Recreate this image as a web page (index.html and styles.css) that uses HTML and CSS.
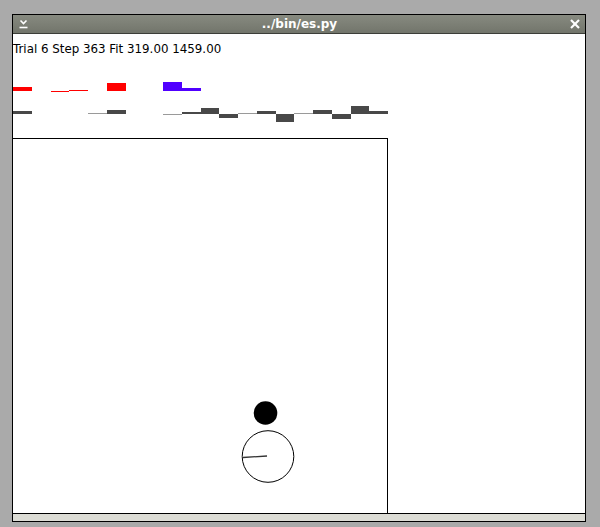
FILE: index.html
```html
<!DOCTYPE html>
<html>
<head>
<meta charset="utf-8">
<title>../bin/es.py</title>
<link rel="stylesheet" href="styles.css">
</head>
<body>
<div class="window">
  <div class="titlebar">
    <svg class="tb-icon" width="10" height="10" viewBox="0 0 10 10">
      <polyline points="1.5,1.5 4.5,4.5 7.5,1.5" fill="none" stroke="#fff" stroke-width="1.6"/>
      <line x1="0.5" y1="8.5" x2="8.5" y2="8.5" stroke="#fff" stroke-width="1.6"/>
    </svg>
    <span class="title">../bin/es.py</span>
    <svg class="tb-icon" width="10" height="10" viewBox="0 0 10 10">
      <line x1="1" y1="1" x2="9" y2="9" stroke="#fff" stroke-width="2.2"/>
      <line x1="9" y1="1" x2="1" y2="9" stroke="#fff" stroke-width="2.2"/>
    </svg>
  </div>
  <div class="content">
    <div class="status">Trial 6 Step 363 Fit 319.00 1459.00</div>
    <svg class="bars" width="375" height="62" viewBox="0 0 375 62" shape-rendering="crispEdges">
      <!-- row 1: baseline y=15 -->
      <rect x="0" y="11" width="19" height="4" fill="#ff0000"/>
      <rect x="37.5" y="15" width="18.75" height="1" fill="#ff0000"/>
      <rect x="56.25" y="14" width="18.75" height="1" fill="#ff0000"/>
      <rect x="93.75" y="7" width="18.75" height="8" fill="#ff0000"/>
      <rect x="150" y="6" width="18.75" height="9" fill="#5000ff"/>
      <rect x="168.75" y="12" width="18.75" height="3" fill="#5000ff"/>
      <!-- row 2: baseline y=38 -->
      <rect x="0" y="35" width="19" height="3" fill="#484848"/>
      <rect x="75" y="37" width="18.75" height="1" fill="#9a9a9a"/>
      <rect x="93.75" y="34" width="18.75" height="4" fill="#484848"/>
      <rect x="150" y="38" width="18.75" height="1" fill="#9a9a9a"/>
      <rect x="168.75" y="36" width="18.75" height="2" fill="#484848"/>
      <rect x="187.5" y="32" width="18.75" height="6" fill="#484848"/>
      <rect x="206.25" y="38" width="18.75" height="4" fill="#484848"/>
      <rect x="225" y="37" width="18.75" height="1" fill="#9a9a9a"/>
      <rect x="243.75" y="35" width="18.75" height="3" fill="#484848"/>
      <rect x="262.5" y="38" width="18.75" height="8" fill="#484848"/>
      <rect x="281.25" y="37" width="18.75" height="1" fill="#9a9a9a"/>
      <rect x="300" y="34" width="18.75" height="4" fill="#484848"/>
      <rect x="318.75" y="38" width="18.75" height="5" fill="#484848"/>
      <rect x="337.5" y="30" width="18.75" height="8" fill="#484848"/>
      <rect x="356.25" y="35" width="18.75" height="3" fill="#484848"/>
    </svg>
    <div class="arena">
      <svg class="arena-canvas" width="374" height="374" viewBox="0 0 374 374">
        <circle cx="252.5" cy="274" r="11.8" fill="#000"/>
        <circle cx="255" cy="317.5" r="25.8" fill="none" stroke="#000" stroke-width="1"/>
        <line x1="254" y1="317" x2="230" y2="318.5" stroke="#333" stroke-width="1.3"/>
      </svg>
    </div>
  </div>
  <div class="statusbar"></div>
</div>
</body>
</html>
```

FILE: styles.css
```css
html, body {
  margin: 0;
  padding: 0;
  background: #aaaaaa;
}

body {
  width: 600px;
  height: 527px;
  overflow: hidden;
}

.window {
  margin: 14px 0 0 12px;
  width: 574px;
  height: 508px;
  box-sizing: border-box;
  border: 1px solid #000;
  display: flex;
  flex-direction: column;
  background: #fff;
}

.titlebar {
  height: 18px;
  flex: none;
  background: linear-gradient(#878a80, #72756b);
  border-bottom: 1px solid #3c3e38;
  display: flex;
  align-items: center;
  justify-content: space-between;
  padding: 0 5px 0 6px;
}

.tb-icon {
  display: block;
  flex: none;
}

.title {
  color: #fff;
  font-family: "DejaVu Sans", sans-serif;
  font-weight: bold;
  font-size: 12px;
  line-height: 18px;
}

.content {
  flex: 1;
  display: flex;
  flex-direction: column;
  background: #fff;
  min-height: 0;
}

.status {
  height: 42px;
  box-sizing: border-box;
  padding-top: 8px;
  font-family: "DejaVu Sans", sans-serif;
  font-size: 11.85px;
  line-height: 14px;
  color: #000;
}

.bars {
  display: block;
  flex: none;
}

.arena {
  flex: 1;
  width: 374px;
  border-top: 1px solid #000;
  border-right: 1px solid #000;
  min-height: 0;
  overflow: hidden;
}

.arena-canvas {
  display: block;
}

.statusbar {
  height: 7px;
  flex: none;
  border-top: 1px solid #000;
  background: #dcdcd5;
}
```
